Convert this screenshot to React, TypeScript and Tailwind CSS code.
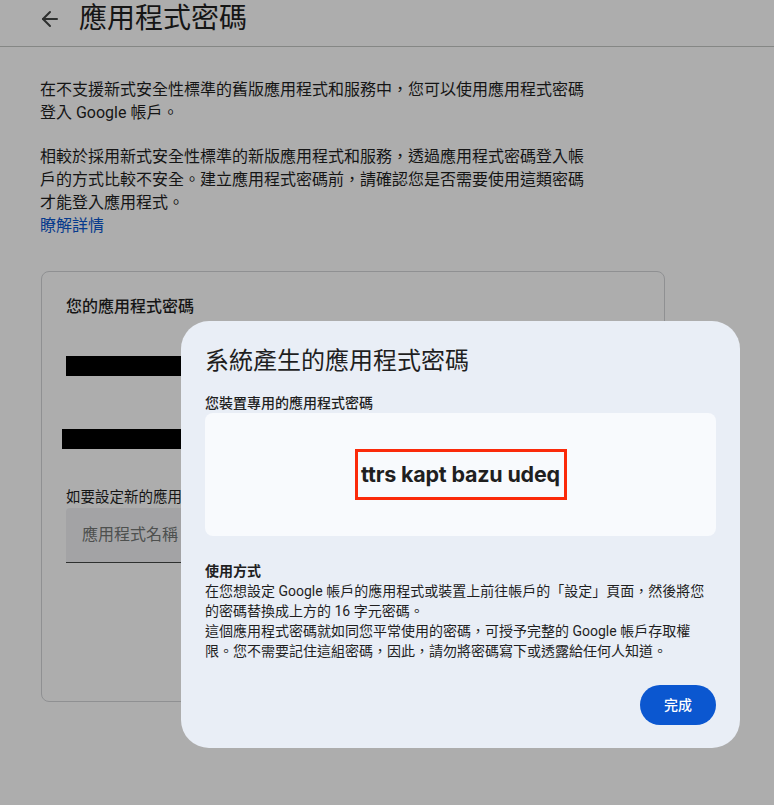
import React from 'react';
import { ArrowLeft } from 'lucide-react';

const FONT = 'font-[Roboto,"Noto_Sans_CJK_TC",sans-serif]';

const RedactedRow: React.FC<{ left: number; width: number; top: number }> = ({ left, width, top }) => (
    <div className="h-[20px] flex" style={{ marginTop: top }}>
        <div className="h-[20px] bg-black" style={{ marginLeft: left, width }} />
    </div>
);

const PasswordDialog: React.FC = () => (
    <div className="fixed left-[181px] top-[321px] w-[559px] rounded-[28px] bg-[#e9eef6] px-6 pt-6 pb-[23px] text-[#1f1f1f]">
        <h2 className="text-[24px] leading-[32px]">系統產生的應用程式密碼</h2>
        <p className="mt-4 text-[14px] leading-[20px] font-medium text-[#1f1f1f]">您裝置專用的應用程式密碼</p>
        <div className="h-[123px] rounded-lg bg-[#f8fafd] flex items-center justify-center">
            <div className="border-[3px] border-[#fb2a0a] h-[51px] w-[212px] flex items-center justify-center">
                <span className="font-[Inter,sans-serif] font-bold text-[21.5px] tracking-[-0.2px] text-[#1f1f1f]">ttrs kapt bazu udeq</span>
            </div>
        </div>
        <div className="mt-[25px] text-[14px] leading-[20px] text-[#1f1f1f]">
            <p className="font-bold">使用方式</p>
            <p className="whitespace-nowrap">
                在您想設定 Google 帳戶的應用程式或裝置上前往帳戶的「設定」頁面，然後將您<br />
                的密碼替換成上方的 16 字元密碼。
            </p>
            <p className="whitespace-nowrap">
                這個應用程式密碼就如同您平常使用的密碼，可授予完整的 Google 帳戶存取權<br />
                限。您不需要記住這組密碼，因此，請勿將密碼寫下或透露給任何人知道。
            </p>
        </div>
        <div className="mt-6 flex justify-end">
            <button className="h-10 w-[76px] rounded-full bg-[#0b57d0] text-white text-[14px] font-medium">完成</button>
        </div>
    </div>
);

export default function App() {
    return (
        <div className={`relative w-[774px] h-[805px] overflow-hidden bg-white text-[#1f1f1f] ${FONT}`}>
            <header className="h-[47px] border-b border-[#c4c7c5] flex items-start pt-[4px]">
                <button className="ml-[38px] mt-[3px] text-[#444746]">
                    <ArrowLeft size={24} strokeWidth={2} />
                </button>
                <h1 className="ml-[17px] text-[28px] leading-[30px]">應用程式密碼</h1>
            </header>

            <main className="pl-10">
                <div className="mt-[31px] w-[580px] text-[16px] leading-[23.3px] text-[#1f1f1f] whitespace-nowrap">
                    <p>在不支援新式安全性標準的舊版應用程式和服務中，您可以使用應用程式密碼<br />登入 Google 帳戶。</p>
                    <p className="mt-[20px]">
                        相較於採用新式安全性標準的新版應用程式和服務，透過應用程式密碼登入帳<br />
                        戶的方式比較不安全。建立應用程式密碼前，請確認您是否需要使用這類密碼<br />
                        才能登入應用程式。
                    </p>
                    <a className="block text-[#0b57d0]">瞭解詳情</a>
                </div>

                <section className="mt-[33px] ml-px w-[624px] h-[431px] rounded-lg border border-[#d3d5d8] pt-[23px]">
                    <h3 className="pl-6 text-[16px] leading-[24px] font-medium">您的應用程式密碼</h3>
                    <RedactedRow left={24} width={119} top={37} />
                    <RedactedRow left={20} width={123} top={53} />
                    <p className="mt-[39px] pl-6 text-[14.5px] leading-[20px] text-[#1f1f1f]">如要設定新的應用程式密碼，請在下方輸入應用程式名稱</p>
                    <div className="ml-6 w-[560px] h-[55px] bg-[#f0f1f4] border-b border-[#444746] rounded-t flex items-center px-4">
                        <span className="text-[16px] text-[#747775]">應用程式名稱</span>
                    </div>
                </section>
            </main>

            <div className="fixed inset-0 bg-black/[0.32]" />
            <PasswordDialog />
        </div>
    );
}
